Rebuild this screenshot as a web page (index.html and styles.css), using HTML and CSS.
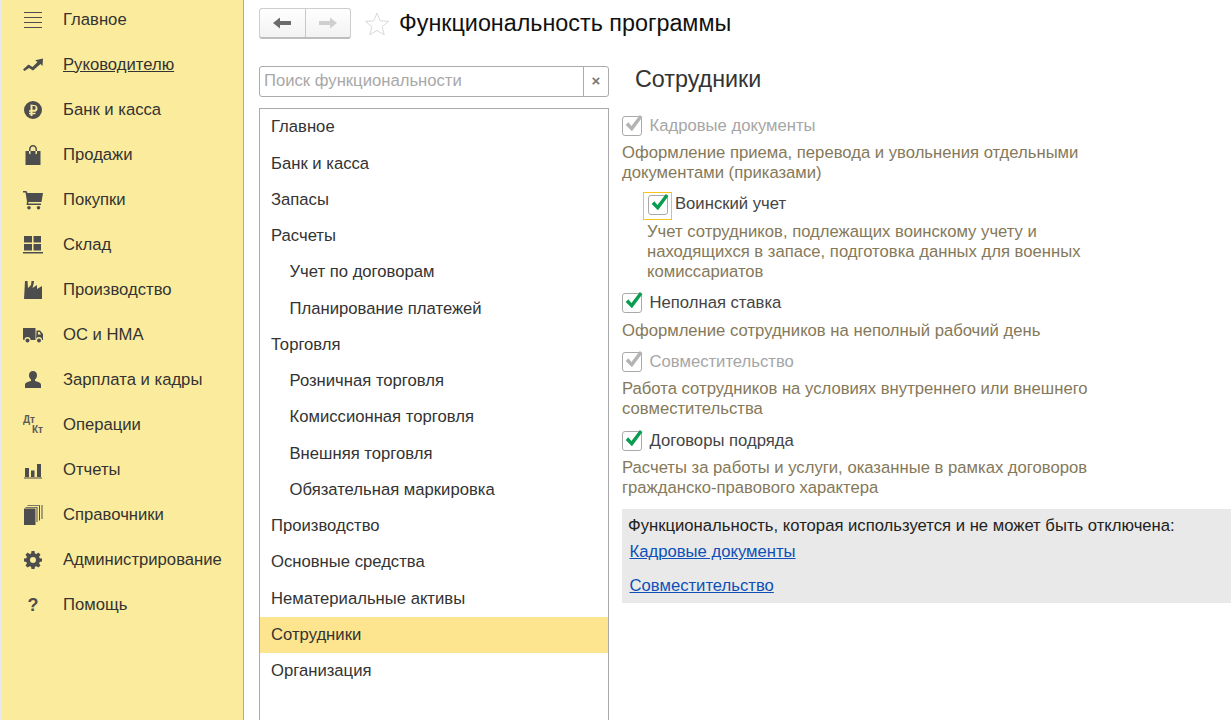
FILE: index.html
```html
<!DOCTYPE html>
<html lang="ru">
<head>
<meta charset="utf-8">
<title>Функциональность программы</title>
<link rel="stylesheet" href="styles.css">
</head>
<body>
<div class="app">
  <nav class="side">
    <a class="nav"><svg viewBox="0 0 20 20"><path d="M1 2h18v1H1zM1 7h18v1H1zM1 12h18v1H1zM1 17h18v1H1z"/></svg><span>Главное</span></a>
    <a class="nav"><svg viewBox="0 0 20 20"><path d="M0 14.500l5.500-5 4 2.500 5-5-2.300-1.700L20 3.500l-.5 7.500-2-2-7.500 6.500-4-2.500-4.500 3z"/></svg><span class="ul">Руководителю</span></a>
    <a class="nav"><svg viewBox="0 0 20 20"><path fill-rule="evenodd" d="M10 1a9 9 0 1 1 0 18 9 9 0 0 1 0-18zM7.500 4.500v5.800H6v1.500h1.500v1H6v1.500h1.500V16h2v-1.700h3v-1.500h-3v-1h1.500c2.300 0 3.500-1.300 3.500-3.400s-1.300-3.400-3.500-3.400zM9.500 6.100H11c1.100 0 1.600.7 1.600 1.800s-.5 1.800-1.600 1.800H9.500z"/></svg><span>Банк и касса</span></a>
    <a class="nav"><svg viewBox="0 0 20 20"><path fill-rule="evenodd" d="M2.500 6H6V4.500C6 1.500 7.800 0 10 0s4 1.500 4 4.500V6h3.500v14h-15zM7.500 6h5V4.500C12.500 2.500 11.500 1.500 10 1.500S7.500 2.500 7.500 4.500zM6 6v2.500l1.500 1V6zM12.500 6v3.500l1.500-1V6z"/></svg><span>Продажи</span></a>
    <a class="nav"><svg viewBox="0 0 20 20"><path d="M0 1h3.500l1 2H20l-1.500 9H5.500l-.3 1.500H18V15H3.500l.5-3.500L2.500 2.500H0z"/><circle cx="6" cy="17.700" r="1.800"/><circle cx="15.500" cy="17.700" r="1.800"/></svg><span>Покупки</span></a>
    <a class="nav"><svg viewBox="0 0 20 20"><path d="M1 1h8v6.500H1zM10.500 1H18v6.500h-7.500zM1 9h8v6.500H1zM10.500 9H18v6.500h-7.500zM0 17h20v1.500H0z"/></svg><span>Склад</span></a>
    <a class="nav"><svg viewBox="0 0 20 20"><path d="M2 1h2.500l.5 7 3-3 .5-4H11l-.3 2.500L9.500 8 14 5v4l5-3v13H1z"/></svg><span>Производство</span></a>
    <a class="nav"><svg viewBox="0 0 20 20"><path fill-rule="evenodd" d="M0 3h12.500v12H7.500a3 3 0 0 0-6 0H1a1 1 0 0 1-1-1zM13.500 5.500H17l3 3.500v6h-1a3 3 0 0 0-6 0zM15 7v2.500h3L16.500 7z"/><circle cx="4.500" cy="15.500" r="2"/><circle cx="16" cy="15.500" r="2"/></svg><span>ОС и НМА</span></a>
    <a class="nav"><svg viewBox="0 0 20 20"><path d="M10 1c2.500 0 4 1.800 4 4.200 0 2-.8 3.500-2 4.300v1.500c2.500.8 6 1.300 6 4V18H2v-3c0-2.700 3.500-3.200 6-4V9.500C6.800 8.700 6 7.200 6 5.200 6 2.800 7.500 1 10 1z"/></svg><span>Зарплата и кадры</span></a>
    <a class="nav"><span class="dk"><b>Дт</b><b class="kt">Кт</b></span><span>Операции</span></a>
    <a class="nav"><svg viewBox="0 0 20 20"><path d="M2 8h4v9H2zM8 10.500h3.500V17H8zM14 4h4v13h-4zM1 17.500h18v1H1z"/></svg><span>Отчеты</span></a>
    <a class="nav"><svg viewBox="0 0 20 20"><path d="M1 3.500h11.500V20H1z"/><path d="M13.500 2.500h1v14.500h-1zM2.500 2h12v.8h-12zM16 1h1v14.500h-1zM4.500.300H17v.8H4.500zM18.500 0h1v14h-1z"/></svg><span>Справочники</span></a>
    <a class="nav"><svg viewBox="0 0 20 20"><path fill-rule="evenodd" d="M8.500 1h3l.4 2.400 1.500.6 2-1.400 2.100 2.100-1.400 2 .6 1.500 2.300.4v3l-2.300.4-.6 1.500 1.400 2-2.100 2.100-2-1.400-1.500.6-.4 2.200h-3l-.4-2.200-1.500-.6-2 1.400-2.100-2.100 1.400-2-.6-1.500-2.300-.4v-3l2.300-.4.600-1.500-1.400-2 2.100-2.100 2 1.400 1.500-.6zM10 7a3 3 0 1 0 0 6 3 3 0 0 0 0-6z"/></svg><span>Администрирование</span></a>
    <a class="nav"><span class="q">?</span><span>Помощь</span></a>
  </nav>
  <main class="main">
    <header class="top">
      <div class="navbtns">
        <button class="hist"><svg viewBox="0 0 18 12" class="arr"><path d="M0 6l7-5.500V4h11v4H7v3.500z"/></svg></button>
        <button class="hist off"><svg viewBox="0 0 18 12" class="arr"><path d="M18 6l-7-5.500V4H0v4h11v3.500z"/></svg></button>
      </div>
      <svg class="star" viewBox="0 0 26 26"><path d="M13 2l3.200 7.800 8.300.6-6.400 5.300 2.100 8.100L13 19.400l-7.200 4.400 2.100-8.100-6.400-5.300 8.300-.6z"/></svg>
      <h1>Функциональность программы</h1>
    </header>
    <div class="cols">
      <section class="left">
        <div class="search"><span class="ph">Поиск функциональности</span><span class="clr">×</span></div>
        <ul class="list">
          <li>Главное</li>
          <li>Банк и касса</li>
          <li>Запасы</li>
          <li>Расчеты</li>
          <li class="sub">Учет по договорам</li>
          <li class="sub">Планирование платежей</li>
          <li>Торговля</li>
          <li class="sub">Розничная торговля</li>
          <li class="sub">Комиссионная торговля</li>
          <li class="sub">Внешняя торговля</li>
          <li class="sub">Обязательная маркировка</li>
          <li>Производство</li>
          <li>Основные средства</li>
          <li>Нематериальные активы</li>
          <li class="cur">Сотрудники</li>
          <li>Организация</li>
        </ul>
      </section>
      <section class="right">
        <h2>Сотрудники</h2>
        <div class="opt dis o1"><span class="cb"><svg viewBox="0 0 20 20"><path d="M3.500 9.500l2.500-2.500 3 3.500L17 0l2.500 2-10 13.500z"/></svg></span><span>Кадровые документы</span></div>
        <p class="desc d1">Оформление приема, перевода и увольнения отдельными<br>документами (приказами)</p>
        <div class="opt ind"><span class="focus"><span class="cb"><svg viewBox="0 0 20 20"><path d="M3.500 9.500l2.500-2.500 3 3.500L17 0l2.500 2-10 13.500z"/></svg></span></span><span>Воинский учет</span></div>
        <p class="desc d2">Учет сотрудников, подлежащих воинскому учету и<br>находящихся в запасе, подготовка данных для военных<br>комиссариатов</p>
        <div class="opt o3"><span class="cb"><svg viewBox="0 0 20 20"><path d="M3.500 9.500l2.500-2.500 3 3.500L17 0l2.500 2-10 13.500z"/></svg></span><span>Неполная ставка</span></div>
        <p class="desc d3">Оформление сотрудников на неполный рабочий день</p>
        <div class="opt dis o4"><span class="cb"><svg viewBox="0 0 20 20"><path d="M3.500 9.500l2.500-2.500 3 3.500L17 0l2.500 2-10 13.500z"/></svg></span><span>Совместительство</span></div>
        <p class="desc d1">Работа сотрудников на условиях внутреннего или внешнего<br>совместительства</p>
        <div class="opt o5"><span class="cb"><svg viewBox="0 0 20 20"><path d="M3.500 9.500l2.500-2.500 3 3.500L17 0l2.500 2-10 13.500z"/></svg></span><span>Договоры подряда</span></div>
        <p class="desc d1">Расчеты за работы и услуги, оказанные в рамках договоров<br>гражданско-правового характера</p>
        <div class="note">
          <div class="note-t">Функциональность, которая используется и не может быть отключена:</div>
          <a class="lnk">Кадровые документы</a>
          <a class="lnk l2">Совместительство</a>
        </div>
      </section>
    </div>
  </main>
</div>
</body>
</html>
```
FILE: styles.css
```css
* { box-sizing: border-box; }
html, body { margin: 0; height: 720px; overflow: hidden; background: #fff; }
body { font: 16.67px/20px "Liberation Sans", Arial, sans-serif; color: #333; }
ul, h1, h2, p { margin: 0; padding: 0; }
.app { display: flex; height: 720px; }

.side { width: 244px; flex: none; background: #fbec9d; border-right: 1px solid #a9a9a9; display: flex; flex-direction: column; border-left: 2px solid #e8e8ee; margin-top: -3px; height: 723px; }
.nav { height: 45px; flex: none; display: flex; align-items: center; color: #333; padding-left: 21px; }
.nav svg { width: 20px; height: 20px; flex: none; fill: #4d4d4d; margin-right: 20px; }
.ul { text-decoration: underline; }
.dk { width: 20px; height: 20px; margin-right: 20px; display: flex; flex-direction: column; font-size: 10px; line-height: 10px; color: #5a5a5a; }
.dk b { display: block; }
.kt { align-self: flex-end; }
.q { width: 20px; margin-right: 20px; text-align: center; font-weight: bold; font-size: 18px; color: #4d4d4d; }

.main { flex: 1; min-width: 0; }
.top { height: 47px; display: flex; align-items: center; padding-left: 15px; }
.navbtns { display: flex; width: 92px; height: 31px; border: 1px solid #cdcdcd; border-bottom: 2px solid #bdbdbd; border-radius: 3px; background: linear-gradient(#fff, #f2f2f2); }
.hist { flex: 1; padding: 0; border: 0; background: none; display: flex; align-items: center; justify-content: center; }
.hist + .hist { border-left: 1px solid #c8c8c8; }
.arr { width: 18px; height: 12px; fill: #6b6b6b; }
.off .arr { fill: #cfcfcf; }
.star { width: 26px; height: 26px; margin-left: 13px; fill: #fff; stroke: #d9d9d9; stroke-width: 1; }
.top h1 { font-size: 23.33px; font-weight: normal; color: #111; margin: 0 0 1px 9px; line-height: 26px; }

.cols { display: flex; }
.left { width: 350px; flex: none; margin-left: 15px; padding-top: 19px; }
.search { height: 31px; display: flex; border: 1px solid #ababab; border-radius: 3px; color: #a8a8a8; }
.ph { flex: 1; padding-left: 4px; line-height: 27px; border-right: 1px solid #ababab; }
.clr { width: 24px; text-align: center; color: #777; font-weight: bold; font-size: 15px; line-height: 27px; }
.list { list-style: none; margin-top: 11px; height: 620px; border: 1px solid #a9a9a9; border-bottom: 0; padding-top: 0.25px; }
.list li { height: 36.25px; padding-left: 11px; line-height: 35.8px; color: #333; }
.list .sub { padding-left: 29.5px; }
.list .cur { background: #fde48f; }

.right { flex: 1; min-width: 0; margin-left: 13px; padding-top: 6px; }
.right h2 { font-size: 23.33px; font-weight: normal; line-height: 52px; margin-left: 13px; color: #333; height: 52px; }
.opt { display: flex; align-items: center; height: 24px; color: #444; }
.opt > .cb { margin-right: 7.5px; }
.cb { display: block; position: relative; width: 20px; height: 20px; border: 1px solid #a9a9a9; border-radius: 3px; background: #fff; flex: none; }
.cb svg { position: absolute; left: -1px; top: -2px; width: 21px; height: 21px; fill: #0a9c50; }
.dis { color: #a6a6a6; }
.dis .cb svg { fill: #b4b4b4; }
.desc { color: #85795a; margin-top: 5px; }
.o1 { margin-top: 9px; }
.ind { margin: 9px 0 0 21px; }
.focus { width: 29px; height: 28px; flex: none; align-self: flex-start; border: 1px solid #f5c518; padding-bottom: 2px; display: flex; align-items: center; justify-content: center; margin-right: 3px; }
.d2 { margin: 6px 0 0 25px; }
.d3 { margin-top: 6px; }
.o3 { margin-top: 9px; }
.o4 { margin-top: 9px; }
.o5 { margin-top: 10px; }
.note { margin-top: 11px; height: 94px; background: #e9e9e9; padding: 7px 6px 0; color: #222; }
.note-t { line-height: 20px; }
.lnk { display: block; margin: 6px 0 0 1.5px; color: #0d50b8; text-decoration: underline; }
.l2 { margin-top: 14px; }
```
